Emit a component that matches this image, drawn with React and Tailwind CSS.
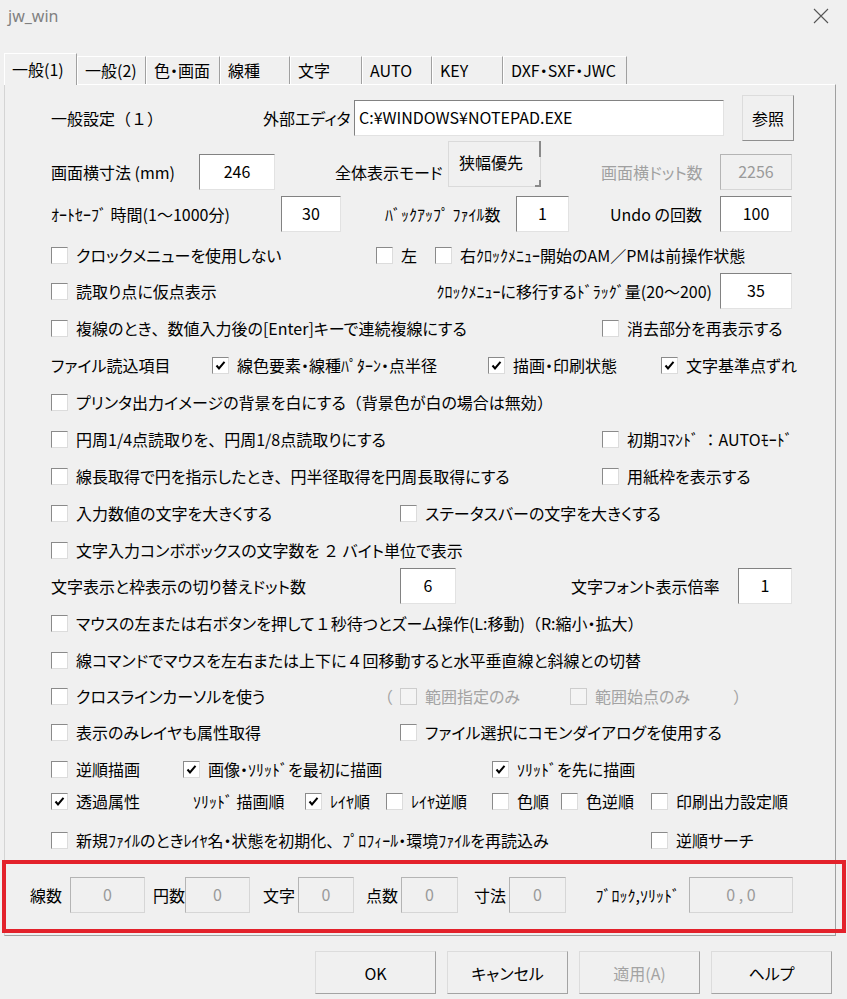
import React from 'react'

const TABS = [
  { label: '一般(1)', w: 'w-[73px]', active: true },
  { label: '一般(2)', w: 'w-[69px]' },
  { label: '色・画面', w: 'w-[74px]' },
  { label: '線種', w: 'w-[70px]' },
  { label: '文字', w: 'w-[72px]' },
  { label: 'AUTO', w: 'w-[70px]' },
  { label: 'KEY', w: 'w-[71px]' },
  { label: 'DXF・SXF・JWC', w: 'w-[124px]' },
]

// full-width punctuation keeps its full advance, kana stay proportional
function T(str) {
  return str.split(/([、（）：１２４／～])/).map((s, i) =>
    i % 2 ? <span key={i} className="[font-feature-settings:normal]">{s}</span> : s
  )
}

function Box({ checked, disabled }) {
  return (
    <span
      className={`flex h-[17px] w-[17px] shrink-0 items-center justify-center border ${
        disabled
          ? 'border-[#cdcdcd] bg-[#f4f4f4]'
          : 'border-t-[#8a8a8a] border-l-[#8a8a8a] border-r-[#dcdcdc] border-b-[#dcdcdc] bg-white'
      }`}
    >
      {checked && (
        <svg width="11" height="11" viewBox="0 0 11 11">
          <path d="M1.5 5.5 L4 8.5 L9.5 1.8" fill="none" stroke="#000" strokeWidth="2" />
        </svg>
      )}
    </span>
  )
}

function Check({ label, checked, disabled }) {
  return (
    <div className="flex items-center">
      <Box checked={checked} disabled={disabled} />
      <span className={`ml-[8px] whitespace-nowrap ${disabled ? 'text-[#a3a3a3]' : ''}`}>{T(label)}</span>
    </div>
  )
}

function Cell({ w, className = '', children }) {
  return <div className={`flex shrink-0 items-center whitespace-nowrap ${w} ${className}`}>{children}</div>
}

function Input({ w, value, left, disabled, h = 'h-[36px]' }) {
  return (
    <div
      className={`flex shrink-0 items-center border ${w} ${h} ${left ? 'justify-start pl-[4px]' : 'justify-center'} ${
        disabled
          ? 'border-t-[#b4b4b4] border-l-[#b4b4b4] border-r-[#d6d6d6] border-b-[#d6d6d6] bg-[#f0f0f0] text-[#9a9a9a]'
          : 'border-t-[#828282] border-l-[#828282] border-r-[#e2e2e2] border-b-[#e2e2e2] bg-white'
      }`}
    >
      <span className="-mt-[3px] whitespace-nowrap">{value}</span>
    </div>
  )
}

function Row({ mt = '', h = 'h-[36px]', children }) {
  return <div className={`flex items-center ${h} ${mt}`}>{children}</div>
}

function Btn({ label, disabled }) {
  return (
    <button
      className={`flex h-[43px] w-[121px] items-center justify-center border border-t-[#dcdcdc] border-l-[#dcdcdc] border-r-[#a3a3a3] border-b-[#a3a3a3] bg-[#f0f0f0] ${
        disabled ? 'text-[#a3a3a3]' : 'text-black'
      }`}
    >
      {label}
    </button>
  )
}

export default function App() {
  return (
    <div className="relative h-[999px] w-[847px] overflow-hidden bg-[#f0f0f0] font-['Noto_Sans_CJK_JP','Noto_Sans',sans-serif] text-[16px] leading-[20px] text-black [font-feature-settings:'palt']">
      {/* Title bar */}
      <div className="flex h-[32px] items-center justify-between pl-[8px] pr-[18px]">
        <span className="font-['Noto_Sans',sans-serif] text-[16px] text-[#808080]">jw_win</span>
        <svg width="16" height="16" viewBox="0 0 16 16">
          <path d="M1 1 L15 15 M15 1 L1 15" stroke="#555" strokeWidth="1.1" />
        </svg>
      </div>

      {/* Tabs */}
      <div className="relative z-10 mt-[21px] flex h-[31px] items-end pl-[4px]">
        {TABS.map(t => (
          <div
            key={t.label}
            className={`${t.w} shrink-0 border-t border-l border-r border-t-white border-l-white border-r-[#a0a0a0] pl-[7px] whitespace-nowrap ${
              t.active ? '-mb-[1px] h-[32px] bg-[#f0f0f0] pt-[5px]' : 'h-[28px] pt-[3px]'
            }`}
          >
            {t.label}
          </div>
        ))}
      </div>

      {/* Panel */}
      <div className="ml-[4px] w-[832px] border border-t-white border-l-[#d4d4d4] border-r-[#a0a0a0] border-b-[#a0a0a0] pt-[10px]">
        <div className="pl-[46px]">
          <Row h="h-[46px]">
            <Cell w="w-[212px]"><span className="[font-feature-settings:normal]">一般設定（１）</span></Cell>
            <Cell w="w-[91px]">外部エディタ</Cell>
            <Input w="w-[370px]" value="C:¥WINDOWS¥NOTEPAD.EXE" left />
            <button className="ml-[18px] flex h-[46px] w-[52px] items-center justify-center border border-t-[#dcdcdc] border-l-[#dcdcdc] border-r-[#8f8f8f] border-b-[#8f8f8f] bg-[#f0f0f0]">
              参照
            </button>
          </Row>

          <Row mt="mt-[13px]">
            <Cell w="w-[148px]">画面横寸法 (mm)</Cell>
            <Input w="w-[76px]" value="246" />
            <Cell w="w-[113px]" className="ml-[60px]">全体表示モード</Cell>
            <div className="relative -mt-[13px] h-[46px] w-[93px] shrink-0 self-start border border-[#dadada] pl-[10px] pt-[10px]">
              狭幅優先
              <span className="absolute -right-[1px] -top-[1px] h-[16px] w-[2px] bg-[#8a8a8a]" />
              <span className="absolute -bottom-[1px] -right-[1px] h-[7px] w-[2px] bg-[#8a8a8a]" />
              <span className="absolute -bottom-[1px] right-0 h-[2px] w-[5px] bg-[#8a8a8a]" />
            </div>
            <Cell w="w-[119px]" className="ml-[60px] text-[#a0a0a0]">画面横ドット数</Cell>
            <Input w="w-[72px]" value="2256" disabled />
          </Row>

          <Row mt="mt-[6px]">
            <Cell w="w-[230px]">{T('ｵｰﾄｾｰﾌﾞ 時間(1～1000分)')}</Cell>
            <Input w="w-[60px]" value="30" />
            <Cell w="w-[131px]" className="ml-[44px]">ﾊﾞｯｸｱｯﾌﾟ ﾌｧｲﾙ数</Cell>
            <Input w="w-[53px]" value="1" />
            <Cell w="w-[110px]" className="ml-[41px]">Undo の回数</Cell>
            <Input w="w-[72px]" value="100" />
          </Row>

          <Row mt="mt-[5px]">
            <Cell w="w-[325px]"><Check label="クロックメニューを使用しない" /></Cell>
            <Cell w="w-[59px]"><Check label="左" /></Cell>
            <Check label="右ｸﾛｯｸﾒﾆｭｰ開始のAM／PMは前操作状態" />
          </Row>

          <Row>
            <Cell w="w-[365px]"><Check label="読取り点に仮点表示" /></Cell>
            <Cell w="w-[304px]" className="justify-end pr-[8px]">{T('ｸﾛｯｸﾒﾆｭｰに移行するﾄﾞﾗｯｸﾞ量(20～200)')}</Cell>
            <Input w="w-[72px]" value="35" />
          </Row>

          <Row mt="mt-[1px]">
            <Cell w="w-[551px]"><Check label="複線のとき、数値入力後の[Enter]キーで連続複線にする" /></Cell>
            <Check label="消去部分を再表示する" />
          </Row>

          <Row mt="mt-[1px]">
            <Cell w="w-[161px]">ファイル読込項目</Cell>
            <Cell w="w-[276px]"><Check label="線色要素・線種ﾊﾟﾀｰﾝ・点半径" checked /></Cell>
            <Cell w="w-[173px]"><Check label="描画・印刷状態" checked /></Cell>
            <Check label="文字基準点ずれ" checked />
          </Row>

          <Row mt="mt-[1px]">
            <Check label="プリンタ出力イメージの背景を白にする（背景色が白の場合は無効）" />
          </Row>

          <Row mt="mt-[1px]">
            <Cell w="w-[551px]"><Check label="円周1/4点読取りを、円周1/8点読取りにする" /></Cell>
            <Check label="初期ｺﾏﾝﾄﾞ ：AUTOﾓｰﾄﾞ" />
          </Row>

          <Row mt="mt-[1px]">
            <Cell w="w-[551px]"><Check label="線長取得で円を指示したとき、円半径取得を円周長取得にする" /></Cell>
            <Check label="用紙枠を表示する" />
          </Row>

          <Row mt="mt-[1px]">
            <Cell w="w-[349px]"><Check label="入力数値の文字を大きくする" /></Cell>
            <Check label="ステータスバーの文字を大きくする" />
          </Row>

          <Row mt="mt-[1px]">
            <Check label="文字入力コンボボックスの文字数を ２ バイト単位で表示" />
          </Row>

          <Row>
            <Cell w="w-[349px]">文字表示と枠表示の切り替えドット数</Cell>
            <Input w="w-[56px]" value="6" />
            <Cell w="w-[167px]" className="ml-[115px]">文字フォント表示倍率</Cell>
            <Input w="w-[54px]" value="1" />
          </Row>

          <Row mt="mt-[1px]">
            <Check label="マウスの左または右ボタンを押して１秒待つとズーム操作(L:移動)（R:縮小・拡大）" />
          </Row>

          <Row mt="mt-[1px]">
            <Check label="線コマンドでマウスを左右または上下に４回移動すると水平垂直線と斜線との切替" />
          </Row>

          <Row>
            <Cell w="w-[326px]"><Check label="クロスラインカーソルを使う" /></Cell>
            <Cell w="w-[23px]" className="text-[#a3a3a3] [font-feature-settings:normal]">（</Cell>
            <Cell w="w-[170px]"><Check label="範囲指定のみ" disabled /></Cell>
            <Cell w="w-[163px]"><Check label="範囲始点のみ" disabled /></Cell>
            <span className="text-[#a3a3a3] [font-feature-settings:normal]">）</span>
          </Row>

          <Row>
            <Cell w="w-[349px]"><Check label="表示のみレイヤも属性取得" /></Cell>
            <Check label="ファイル選択にコモンダイアログを使用する" />
          </Row>

          <Row h="h-[32px]" mt="mt-[3px]">
            <Cell w="w-[132px]"><Check label="逆順描画" /></Cell>
            <Cell w="w-[309px]"><Check label="画像・ｿﾘｯﾄﾞを最初に描画" checked /></Cell>
            <Check label="ｿﾘｯﾄﾞを先に描画" checked />
          </Row>

          <Row h="h-[32px]">
            <Cell w="w-[142px]"><Check label="透過属性" checked /></Cell>
            <Cell w="w-[112px]">ｿﾘｯﾄﾞ 描画順</Cell>
            <Cell w="w-[81px]"><Check label="ﾚｲﾔ順" checked /></Cell>
            <Cell w="w-[106px]"><Check label="ﾚｲﾔ逆順" /></Cell>
            <Cell w="w-[69px]"><Check label="色順" /></Cell>
            <Cell w="w-[90px]"><Check label="色逆順" /></Cell>
            <Check label="印刷出力設定順" />
          </Row>

          <Row mt="mt-[5px]">
            <Cell w="w-[600px]"><Check label="新規ﾌｧｲﾙのときﾚｲﾔ名・状態を初期化、ﾌﾟﾛﾌｨｰﾙ・環境ﾌｧｲﾙを再読込み" /></Cell>
            <Check label="逆順サーチ" />
          </Row>
        </div>

        {/* Counters */}
        <div className="mb-[22px] mt-[19px] flex h-[36px] items-center pl-[25px]">
          <Cell w="w-[40px]">線数</Cell>
          <Input w="w-[75px]" value="0" disabled />
          <Cell w="w-[40px]" className="justify-end">円数</Cell>
          <Input w="w-[65px]" value="0" disabled />
          <Cell w="w-[48px]" className="justify-end pr-[3px]">文字</Cell>
          <Input w="w-[56px]" value="0" disabled />
          <Cell w="w-[47px]" className="justify-end pr-[3px]">点数</Cell>
          <Input w="w-[57px]" value="0" disabled />
          <Cell w="w-[51px]" className="justify-end pr-[3px]">寸法</Cell>
          <Input w="w-[57px]" value="0" disabled />
          <Cell w="w-[123px]" className="justify-end pr-[9px]">ﾌﾞﾛｯｸ,ｿﾘｯﾄﾞ</Cell>
          <Input w="w-[104px]" value="0 , 0" disabled />
        </div>
      </div>

      {/* Buttons */}
      <div className="ml-[315px] mt-[15px] flex gap-[11px]">
        <Btn label="OK" />
        <Btn label="キャンセル" />
        <Btn label="適用(A)" disabled />
        <Btn label="ヘルプ" />
      </div>

      {/* highlight */}
      <div className="pointer-events-none absolute left-[2px] top-[860px] h-[73px] w-[844px] border-4 border-[#e3222b]" />
    </div>
  )
}
